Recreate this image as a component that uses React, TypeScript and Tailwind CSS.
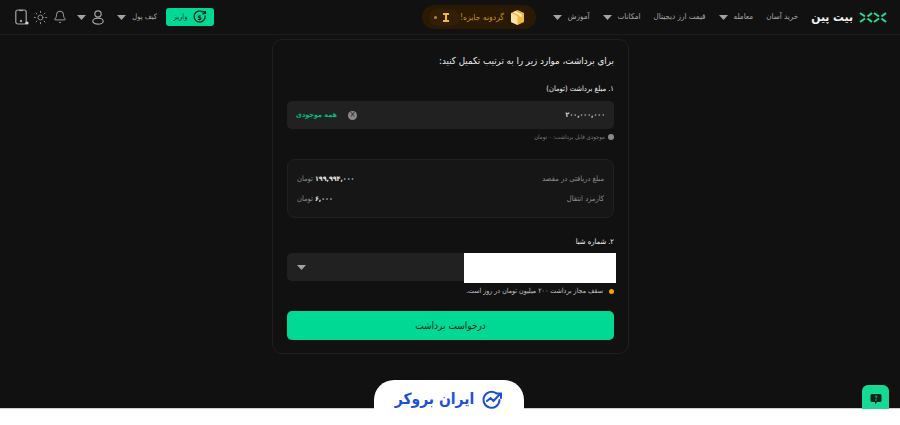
import React from 'react';
import { Bell, Sun } from 'lucide-react';

const Caret = () => (
  <svg width="9" height="5" viewBox="0 0 9 5" className="shrink-0">
    <path d="M0 0h9L4.5 5z" fill="#a3a3a3" />
  </svg>
);

const NavLink = ({ label, caret }: { label: string; caret?: boolean }) => (
  <div className="flex items-center gap-[6px]">
    {caret && <Caret />}
    <span dir="rtl" className="text-[8px] text-[#a8a8a8] whitespace-nowrap">{label}</span>
  </div>
);

const Header = () => (
  <header className="h-[35px] shrink-0 border-b border-[#1c1c1c] flex items-center pl-[15px] pr-[13px]">
    <div className="flex items-center">
      <svg width="14" height="16" viewBox="0 0 14 16" fill="none" stroke="#a3a3a3" strokeWidth="1.2">
        <rect x="0.8" y="1" width="10.4" height="14" rx="2" />
        <path d="M4 1.5h4" />
        <circle cx="6" cy="12" r="1.2" fill="#a3a3a3" stroke="none" />
        <circle cx="12" cy="14" r="1.6" fill="#d4d4d4" stroke="none" />
      </svg>
      <Sun size={15} strokeWidth={1.3} color="#a3a3a3" className="ml-[4px]" />
      <Bell size={14} strokeWidth={1.5} color="#b0b0b0" className="ml-[5px]" />
      <div className="ml-[10px]"><Caret /></div>
      <svg width="12" height="15" viewBox="0 0 12 15" fill="none" stroke="#a3a3a3" strokeWidth="1.2" className="ml-[6px]">
        <circle cx="6" cy="4" r="3.2" />
        <ellipse cx="6" cy="11.200" rx="5.200" ry="3" />
      </svg>
      <div className="ml-[13px]"><Caret /></div>
      <span dir="rtl" className="ml-[5px] w-[26px] text-[7.5px] text-[#a8a8a8] whitespace-nowrap">کیف پول</span>
      <button className="ml-[9px] w-[48px] h-[18px] rounded-[3px] bg-[#00d994] flex items-center justify-center gap-[5px]">
        <span dir="rtl" className="text-[7.5px] text-[#10241c]">واریز</span>
        <svg width="14" height="14" viewBox="0 0 14 14" fill="none" stroke="#10241c" strokeWidth="1.2">
          <path d="M10 2.200A5.500 5.500 0 1 0 12 5.500" />
          <path d="M9.500 4.500l3-3M10 1.500h2.500V4" />
          <text x="4.600" y="9.600" fontSize="7" fontWeight="700" fill="#10241c" stroke="none">$</text>
        </svg>
      </button>
    </div>

    <div className="ml-[208px] w-[114px] h-[24px] rounded-full bg-[#2a1a04] flex items-center pl-[7px] pr-[12px]">
      <div className="w-[36px] h-[17px] rounded-full bg-[#321f06] flex items-center gap-[6px] pl-[5px]">
        <span className="w-[3px] h-[3px] rounded-full bg-[#b98a2d]" />
        <svg width="6" height="9" viewBox="0 0 6 9"><path d="M0 0h6v2H4v5h2v2H0V7h2V2H0z" fill="#f0b93a" /></svg>
      </div>
      <span dir="rtl" className="ml-auto text-[8.5px] text-[#c98f1f] whitespace-nowrap">گردونه جایزه!</span>
      <svg width="13" height="15" viewBox="0 0 13 15" className="ml-[7px] shrink-0">
        <path d="M6.500 0L13 3v9l-6.500 3L0 12V3z" fill="#f4b63f" />
        <path d="M0 3l6.500 3v9L0 12z" fill="#fde3a3" />
        <path d="M4 1.300l6.500 3v3l-2-1v-1L2.200 2.200z" fill="#fff3cf" />
      </svg>
    </div>

    <div className="ml-auto flex items-center gap-[13px]">
      <NavLink label="آموزش" caret />
      <NavLink label="امکانات" caret />
      <NavLink label="قیمت ارز دیجیتال" />
      <NavLink label="معامله" caret />
      <NavLink label="خرید آسان" />
      <div className="flex items-center gap-[6px]">
        <span dir="rtl" className="text-[12px] leading-none font-bold text-[#f2f2f2] whitespace-nowrap">بیت پین</span>
        <svg width="28" height="11" viewBox="0 0 28 11" fill="none" stroke="#22e08f" strokeWidth="2">
          <path d="M1 1l5 3.500M1 10l5-3.500M13 1L8.500 4.500M13 10L8.500 6.500" />
          <path d="M15 1l5 3.500M15 10l5-3.500M27 1l-4.500 3.500M27 10l-4.500-3.500" />
        </svg>
      </div>
    </div>
  </header>
);

const Row = ({ label, value }: { label: string; value: string }) => (
  <div className="flex items-center justify-between h-[12px]">
    <span className="text-[7.5px] text-[#8c8c8c]">{label}</span>
    <span className="flex items-center gap-[2px] text-[7.5px]">
      <span className="font-bold text-[7px] text-[#e8e8e8] tracking-[-0.9px]">{value}</span>
      <span className="text-[#8c8c8c]">تومان</span>
    </span>
  </div>
);

const WithdrawCard = () => (
  <section dir="rtl" className="mt-[4px] ml-[272px] w-[357px] h-[315px] rounded-[10px] border border-[#1f1f1f] px-[14px] pt-[14px]">
    <h1 className="text-[9.7px] leading-[14px] text-[#ececec]">برای برداشت، موارد زیر را به ترتیب تکمیل کنید:</h1>

    <div className="mt-[15px] text-[7.5px] leading-[12px] text-[#ededed]">۱. مبلغ برداشت (تومان)</div>
    <div className="mt-[6px] h-[28px] rounded-[5px] bg-[#212121] flex items-center pr-[9px] pl-[9px]">
      <span className="text-[7px] font-bold text-[#d8d8d8] tracking-[-1px]">۲۰۰,۰۰۰,۰۰۰</span>
      <span className="mr-auto w-[9px] h-[9px] rounded-full bg-[#8a8a8a] flex items-center justify-center text-[8px] leading-none text-[#212121]">×</span>
      <span className="mr-[11px] text-[7.2px] font-bold text-[#00b97c]">همه موجودی</span>
    </div>
    <div className="mt-[4px] flex items-center gap-[3px] h-[7px] text-[6px] text-[#7d7d7d]">
      <span className="w-[6px] h-[6px] rounded-full bg-[#8a8a8a]" />
      <span>موجودی قابل برداشت: ۰ تومان</span>
    </div>

    <div className="mt-[19px] h-[59px] rounded-[8px] border border-[#212121] bg-[#161616] px-[9px] pt-[13px] flex flex-col gap-[8px]">
      <Row label="مبلغ دریافتی در مقصد" value="۱۹۹,۹۹۴,۰۰۰" />
      <Row label="کارمزد انتقال" value="۶,۰۰۰" />
    </div>

    <div className="mt-[18px] text-[7.5px] leading-[12px] text-[#ededed]">۲. شماره شبا</div>
    <div className="relative mt-[5px] h-[28px] rounded-[5px] bg-[#212121] flex items-center justify-end pl-[10px]">
      <Caret />
      <div className="absolute top-0 right-[-2px] w-[152px] h-[30px] bg-white" />
    </div>
    <div className="mt-[5px] flex items-center gap-[6px] text-[7px] leading-[10px] text-[#c4c4c4]">
      <span className="w-[5px] h-[5px] rounded-full bg-[#f5a500]" />
      <span>سقف مجاز برداشت ۲۰۰ میلیون تومان در روز است.</span>
    </div>

    <button className="mt-[15px] w-full h-[29px] rounded-[5px] bg-[#00d994] text-[10px] text-[#0c1f18]">درخواست برداشت</button>
  </section>
);

export default function App() {
  return (
    <div className="relative w-[900px] h-[425px] overflow-hidden bg-[#111111] flex flex-col" style={{ fontFamily: '"DejaVu Sans Condensed", "DejaVu Sans", sans-serif' }}>
      <Header />
      <main className="flex-1">
        <WithdrawCard />
      </main>
      <footer className="h-[17px] shrink-0 bg-white border-t border-[#cfcfcf]" />

      <div className="absolute left-[374px] top-[380px] w-[150px] h-[29px] rounded-t-[20px] bg-white flex items-center justify-center gap-[7px] pt-[11px]">
        <span dir="rtl" className="text-[15.5px] leading-none font-bold text-[#1d4ed8] whitespace-nowrap">ایران بروکر</span>
        <svg width="22" height="20" viewBox="0 0 22 20" fill="none" stroke="#1d4ed8" strokeWidth="2" strokeLinecap="round">
          <path d="M15 3.200A8 8 0 1 0 18.500 10" />
          <path d="M6 11l3.500-3 3 3L19 4M15.500 3.500H20V8" />
        </svg>
      </div>

      <button className="absolute left-[862px] top-[385px] w-[27px] h-[24px] rounded-t-[6px] bg-[#16d995] flex items-center justify-center pt-[3px]">
        <svg width="12" height="12" viewBox="0 0 12 12">
          <path d="M2 1h8a1.500 1.500 0 0 1 1.500 1.500v5A1.500 1.500 0 0 1 10 9H7l-2 2.500V9H2A1.500 1.500 0 0 1 .5 7.500v-5A1.500 1.500 0 0 1 2 1z" fill="#10241c" />
          <circle cx="6" cy="7" r=".7" fill="#16d995" />
          <path d="M6 5.500V4.800c.8-.3 1-.6 1-1a1 1 0 0 0-2 0" stroke="#16d995" strokeWidth=".7" fill="none" />
        </svg>
      </button>
    </div>
  );
}
